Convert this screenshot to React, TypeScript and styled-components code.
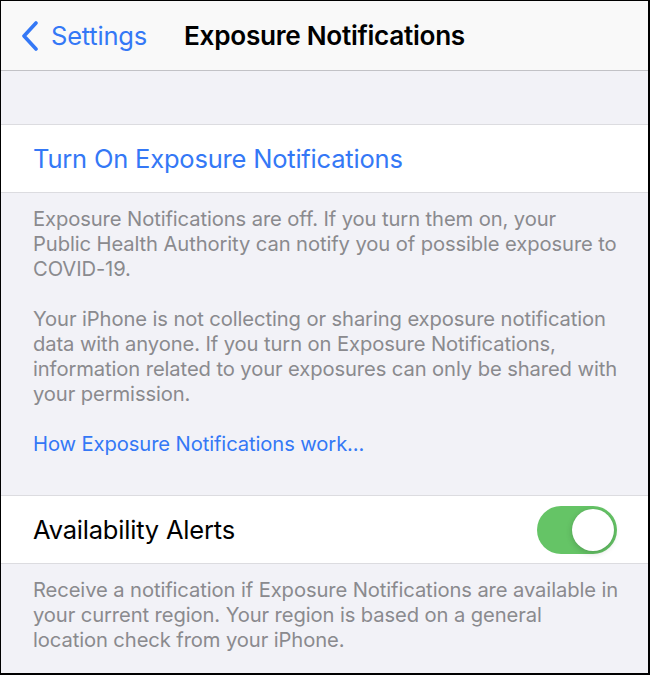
import styled, { createGlobalStyle } from "styled-components";

const GlobalStyle = createGlobalStyle`
    html, body {
        margin: 0;
        padding: 0;
        background: #000;
    }
    * {
        box-sizing: border-box;
    }
`;

const ChevronLeft = () => (
    <svg width="18" height="30" viewBox="0 0 18 30" fill="none">
        <path
            d="M15 2 L3 15 L15 28"
            stroke="#3478f6"
            strokeWidth="3.6"
            strokeLinecap="round"
            strokeLinejoin="round"
        />
    </svg>
);

const App = () => {
    return (
        <>
            <GlobalStyle />
            <Screen>
                <NavBar>
                    <BackButton>
                        <ChevronLeft />
                        <span>Settings</span>
                    </BackButton>
                    <NavTitle>Exposure Notifications</NavTitle>
                    <div />
                </NavBar>

                <GroupGap />

                <Cell>
                    <ActionLabel>Turn On Exposure Notifications</ActionLabel>
                </Cell>
                <Footer>
                    <p>
                        Exposure Notifications are off. If you turn them on, your
                        Public Health Authority can notify you of possible exposure to
                        COVID-19.
                    </p>
                    <p>
                        Your iPhone is not collecting or sharing exposure notification
                        data with anyone. If you turn on Exposure Notifications,
                        information related to your exposures can only be shared with
                        your permission.
                    </p>
                    <FooterLink>How Exposure Notifications work...</FooterLink>
                </Footer>

                <Cell $spaced>
                    <Label>Availability Alerts</Label>
                    <Toggle $on>
                        <Knob />
                    </Toggle>
                </Cell>
                <Footer>
                    <p>
                        Receive a notification if Exposure Notifications are available in
                        your current region. Your region is based on a general location
                        check from your iPhone.
                    </p>
                </Footer>
            </Screen>
        </>
    );
};

const Screen = styled.div`
    width: 650px;
    height: 675px;
    overflow: hidden;
    background: #f2f2f7;
    border: 1px solid #000;
    border-right-width: 2px;
    border-bottom-width: 2px;
    font-family: Inter, "Liberation Sans", sans-serif;
    -webkit-font-smoothing: antialiased;
`;

const NavBar = styled.div`
    height: 70px;
    display: grid;
    grid-template-columns: 1fr auto 1fr;
    align-items: center;
    background: #f9f9f9;
    border-bottom: 1px solid #c2c2c6;
`;

const BackButton = styled.div`
    display: flex;
    align-items: center;
    gap: 12px;
    padding-left: 20px;
    color: #3478f6;
    font-size: 25.5px;
    letter-spacing: -0.2px;
`;

const NavTitle = styled.div`
    font-size: 26.2px;
    font-weight: 600;
    color: #000;
    letter-spacing: -0.3px;
`;

const GroupGap = styled.div`
    height: 53px;
`;

const Cell = styled.div<{ $spaced?: boolean }>`
    height: 69px;
    display: flex;
    align-items: center;
    justify-content: ${(props) => (props.$spaced ? "space-between" : "flex-start")};
    padding: 0 31px 0 32px;
    background: #fff;
    border-top: 1px solid #dcdce0;
    border-bottom: 1px solid #dcdce0;
`;

const ActionLabel = styled.div`
    font-size: 25.5px;
    color: #3478f6;
    letter-spacing: -0.2px;
`;

const Label = styled.div`
    font-size: 25.5px;
    color: #000;
    letter-spacing: -0.2px;
`;

const Toggle = styled.div<{ $on?: boolean }>`
    width: 80px;
    height: 48px;
    border-radius: 24px;
    padding: 3px;
    display: flex;
    justify-content: ${(props) => (props.$on ? "flex-end" : "flex-start")};
    background: ${(props) => (props.$on ? "#65c466" : "#e9e9eb")};
`;

const Knob = styled.div`
    width: 42px;
    height: 42px;
    border-radius: 50%;
    background: #fff;
    box-shadow: 0 2px 6px rgba(0, 0, 0, 0.18), 0 0 1px rgba(0, 0, 0, 0.1);
`;

const Footer = styled.div`
    width: 617.5px;
    padding: 13px 0 39px 32px;
    color: #8a8a8e;
    font-size: 20.2px;
    line-height: 25px;
    letter-spacing: -0.1px;

    p {
        margin: 0 0 25px;
    }
`;

const FooterLink = styled.div`
    color: #3478f6;
`;

export default App;
